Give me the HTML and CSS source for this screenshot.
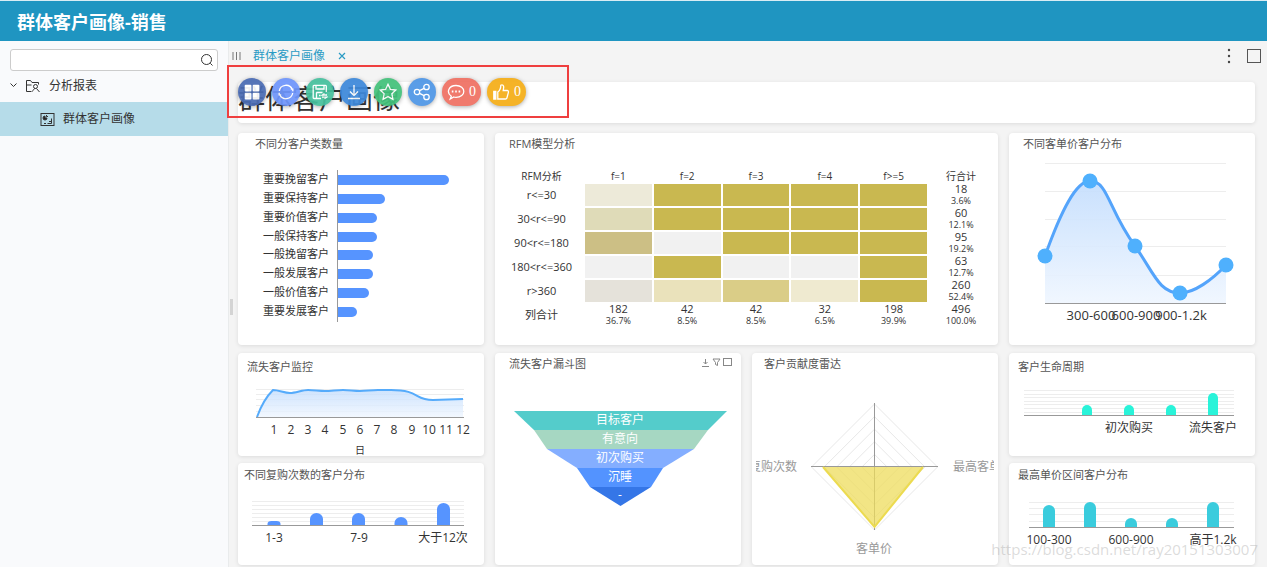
FILE: index.html
```html
<!DOCTYPE html>
<html lang="zh-CN">
<head>
<meta charset="utf-8">
<title>群体客户画像-销售</title>
<link rel="stylesheet" href="styles.css">
</head>
<body>
<header class="app-header"><h1>群体客户画像-销售</h1></header>
<div class="layout">
  <aside class="sidebar">
    <div class="search">
      <input type="text" aria-label="搜索">
      <button type="button" class="icon-btn" aria-label="搜索">
        <svg width="14" height="14" viewBox="0 0 14 14" class="line"><circle cx="6.5" cy="6.5" r="5"/><path d="M10.3 10.3l2.2 2.2"/></svg>
      </button>
    </div>
    <nav class="tree">
      <a class="node" href="#">
        <svg width="9" height="8" viewBox="0 0 9 8" class="line"><path d="M1.500 1.500l3 3 3-3"/></svg>
        <svg width="16" height="14" viewBox="0 0 16 14" class="line folder"><path d="M6.500 12.500H1.500V1.500h4l1.500 2h6.500v2M1.500 6h5"/><circle cx="10.500" cy="7.500" r="2"/><path d="M10.500 9.500c-1.500 0-2.500 1.500-3 3M11.500 9.500l3 3.500"/></svg>
        <span>分析报表</span>
      </a>
      <a class="node leaf" href="#" aria-current="page">
        <svg width="15" height="15" viewBox="0 0 15 15" class="line"><rect x="1" y="1.500" width="13" height="12"/><path d="M5 4a2 2 0 1 0 2 2H5z" fill="#222"/><path d="M6.500 3v1.500H8M4 11.500h2M7.500 11.500h4V6.500M9 9.500h2.500"/></svg>
        <span>群体客户画像</span>
      </a>
    </nav>
  </aside>
  <main class="main">
    <span class="splitter"></span>
    <div class="tabbar">
      <svg width="9" height="10" viewBox="0 0 9 10" class="grip"><path d="M1 1v8M4.500 1v8M8 1v8"/></svg>
      <a class="tab" href="#">群体客户画像</a>
      <button type="button" class="icon-btn close" aria-label="关闭"><svg width="8" height="8" viewBox="0 0 8 8"><path d="M1 1l6 6M7 1l-6 6"/></svg></button>
      <span class="spacer"></span>
      <button type="button" class="icon-btn" aria-label="更多"><svg width="4" height="16" viewBox="0 0 4 16" fill="#444"><circle cx="2" cy="2" r="1.200"/><circle cx="2" cy="8" r="1.200"/><circle cx="2" cy="14" r="1.200"/></svg></button>
      <button type="button" class="icon-btn" aria-label="最大化"><svg width="14" height="14" viewBox="0 0 14 14"><rect x="0.500" y="0.500" width="13" height="13" fill="none" stroke="#555"/></svg></button>
    </div>
    <div class="board">
      <section class="card banner"><h2>群体客户画像</h2></section>
      <div class="highlight"></div>
      <div class="toolbar">
        <button type="button" class="tool menu" aria-label="菜单"><svg width="16" height="16" viewBox="0 0 16 16"><rect x="0.700" y="0.700" width="6.700" height="6.700" rx="1"/><rect x="8.700" y="0.700" width="6.700" height="6.700" rx="1"/><rect x="0.700" y="8.700" width="6.700" height="6.700" rx="1"/><rect x="8.700" y="8.700" width="6.700" height="6.700" rx="1"/></svg></button>
        <button type="button" class="tool refresh" aria-label="刷新"><svg width="16" height="16" viewBox="0 0 16 16"><path d="M1.300 7a6.800 6.800 0 0 1 13-1.500M14.700 9a6.800 6.800 0 0 1-13 1.500M14.800 7.300V5.200h-2M1.200 8.700v2.100h2"/></svg></button>
        <button type="button" class="tool save" aria-label="保存"><svg width="16" height="16" viewBox="0 0 16 16"><path d="M9 14.500H2a.8.8 0 0 1-.8-.8V2.200a.8.8 0 0 1 .8-.8h11.500a.8.8 0 0 1 .8.8V8M4 1.500v3.500h8V1.500M4.500 14.500V8.500h6M7 11.500h1.500M15 11h-4.500l2-1.500M10 13.200h4.500l-2 1.500"/></svg></button>
        <button type="button" class="tool download" aria-label="下载"><svg width="16" height="16" viewBox="0 0 16 16"><path d="M8 1v10M4 7.500L8 11.500l4-4M2 14.500h12"/></svg></button>
        <button type="button" class="tool star" aria-label="收藏"><svg width="18" height="18" viewBox="0 0 18 18"><path d="M9 1.300l2.400 5 5.400.7-3.900 3.800 1 5.400L9 13.600l-4.900 2.600 1-5.400L1.200 7l5.400-.7z"/></svg></button>
        <button type="button" class="tool share" aria-label="分享"><svg width="18" height="18" viewBox="0 0 18 18"><circle cx="4" cy="9" r="2.700"/><circle cx="13.500" cy="4" r="2.700"/><circle cx="13.500" cy="14" r="2.700"/><path d="M6.500 7.700l4.600-2.400M6.500 10.300l4.600 2.400"/></svg></button>
        <button type="button" class="tool pill comment" aria-label="评论"><svg width="18" height="18" viewBox="0 0 18 18"><path d="M4.300 13.200C-1 9.500 1.500 2.500 9 2.500c4.800 0 7.800 2.700 7.800 5.900S13.800 14.300 9 14.300c-.8 0-1.500 0-2.200-.3L3.200 16z"/><path d="M4.800 8.500h1.600M8.200 8.500h1.600M11.600 8.500h1.600" stroke-width="2"/></svg><span>0</span></button>
        <button type="button" class="tool pill like" aria-label="点赞"><svg width="18" height="18" viewBox="0 0 18 18"><path d="M1.800 8.500h2v7.500h-2z" fill="#fff"/><path d="M5.800 9c2.500-1.800 3-4 3-6.800 1.600-1 3.200.2 2.900 2.300L11.200 7.500h4c1 0 1.400.8 1.200 1.800l-1.500 5.700c-.2.700-.6 1-1.400 1H5.800z"/></svg><span>0</span></button>
      </div>

      <div class="row">
        <section class="card">
          <h3 class="in-17">不同分客户类数量</h3>
          <svg class="chart small" viewBox="0 0 246 190">
            <g class="bar-blue">
              <path d="M100 20h106a5 5 0 0 1 0 10h-106z"/><path d="M100 39h42a5 5 0 0 1 0 10h-42z"/><path d="M100 58h34a5 5 0 0 1 0 10h-34z"/><path d="M100 77h34a5 5 0 0 1 0 10h-34z"/><path d="M100 95h30a5 5 0 0 1 0 10h-30z"/><path d="M100 114h30a5 5 0 0 1 0 10h-30z"/><path d="M100 133h26a5 5 0 0 1 0 10h-26z"/><path d="M100 152h14a5 5 0 0 1 0 10h-14z"/>
            </g>
            <path class="axis" d="M99.500 15v152"/>
            <g text-anchor="end"><text x="91" y="28">重要挽留客户</text><text x="91" y="47">重要保持客户</text><text x="91" y="66">重要价值客户</text><text x="91" y="85">一般保持客户</text><text x="91" y="103">一般挽留客户</text><text x="91" y="122">一般发展客户</text><text x="91" y="141">一般价值客户</text><text x="91" y="160">重要发展客户</text></g>
          </svg>
        </section>
        <section class="card wide">
          <h3 class="in-14">RFM模型分析</h3>
          <table class="rfm">
            <colgroup><col class="c-label"><col><col><col><col><col><col class="c-total"></colgroup>
            <thead><tr><th>RFM分析</th><th>f=1</th><th>f=2</th><th>f=3</th><th>f=4</th><th>f&gt;=5</th><th>行合计</th></tr></thead>
            <tbody>
              <tr><th>r&lt;=30</th><td class="h2"></td><td class="h6"></td><td class="h6"></td><td class="h6"></td><td class="h6"></td><td>18<small>3.6%</small></td></tr>
              <tr><th>30&lt;r&lt;=90</th><td class="h3"></td><td class="h6"></td><td class="h6"></td><td class="h6"></td><td class="h6"></td><td>60<small>12.1%</small></td></tr>
              <tr><th>90&lt;r&lt;=180</th><td class="h5"></td><td class="h0"></td><td class="h6"></td><td class="h6"></td><td class="h6"></td><td>95<small>19.2%</small></td></tr>
              <tr><th>180&lt;r&lt;=360</th><td class="h0"></td><td class="h6"></td><td class="h0"></td><td class="h0"></td><td class="h6"></td><td>63<small>12.7%</small></td></tr>
              <tr><th>r&gt;360</th><td class="h1"></td><td class="h7"></td><td class="h4"></td><td class="h8"></td><td class="h6"></td><td>260<small>52.4%</small></td></tr>
            </tbody>
            <tfoot><tr><th>列合计</th><td>182<small>36.7%</small></td><td>42<small>8.5%</small></td><td>42<small>8.5%</small></td><td>32<small>6.5%</small></td><td>198<small>39.9%</small></td><td>496<small>100.0%</small></td></tr></tfoot>
          </table>
        </section>
        <section class="card">
          <h3 class="in-14">不同客单价客户分布</h3>
          <svg class="chart large" viewBox="0 0 246 190">
            <defs><linearGradient id="fade" x1="0" y1="0" x2="0" y2="1"><stop offset="0" stop-color="#c3ddfd"/><stop offset="1" stop-color="#eff6ff"/></linearGradient></defs>
            <path class="rule" d="M36 8.500h181M36 36.500h181M36 64.500h181M36 91.500h181M36 120.500h181"/>
            <path d="M36 101C52 56 67 26 81 26C99 26 99 54 126 91C145 118 150 138 171 138C185 138 203 125 217 110V148H36z" fill="url(#fade)" fill-opacity=".9"/>
            <path class="curve thick" d="M36 101C52 56 67 26 81 26C99 26 99 54 126 91C145 118 150 138 171 138C185 138 203 125 217 110"/>
            <path class="axis" d="M36 148.500h181"/>
            <g fill="#4fb0fd"><circle cx="36" cy="101" r="7.500"/><circle cx="81" cy="26" r="7.500"/><circle cx="126" cy="91" r="7.500"/><circle cx="171" cy="138" r="7.500"/><circle cx="217" cy="110" r="7.500"/></g>
            <g text-anchor="middle"><text x="82" y="165">300-600</text><text x="127" y="165">600-900</text><text x="172" y="165">900-1.2k</text></g>
          </svg>
        </section>
      </div>

      <div class="row lower">
        <div class="stack">
          <section class="card">
            <h3 class="in-9 tall">流失客户监控</h3>
            <svg class="chart" viewBox="0 0 246 75" text-anchor="middle">
              <path class="rule" d="M18 8.500h208M18 13.500h208M18 18.500h208M18 24.500h208M18 30.500h208"/>
              <path d="M19 36C24 22 30 14 35 9C41 9 46 12 52 12S64 9 70 9S81 10 87 10S99 9 105 9S116 10 122 10S133 9 140 9H153C182 9 176 19 195 19L225 18V36z" fill="url(#fade)" fill-opacity=".8"/>
              <path class="curve" d="M19 36C24 22 30 14 35 9C41 9 46 12 52 12S64 9 70 9S81 10 87 10S99 9 105 9S116 10 122 10S133 9 140 9H153C182 9 176 19 195 19L225 18"/>
              <path class="axis" d="M18 36.500h208"/>
              <text x="36" y="53">1</text><text x="53" y="53">2</text><text x="70" y="53">3</text><text x="87" y="53">4</text><text x="105" y="53">5</text><text x="122" y="53">6</text><text x="139" y="53">7</text><text x="156" y="53">8</text><text x="174" y="53">9</text><text x="191" y="53">10</text><text x="208" y="53">11</text><text x="225" y="53">12</text>
              <text class="unit" x="122" y="73">日</text>
            </svg>
          </section>
          <section class="card">
            <h3 class="in-6 mid">不同复购次数的客户分布</h3>
            <svg class="chart" viewBox="0 0 246 78" text-anchor="middle">
              <path class="rule" d="M14 14.500h212M14 18.500h212M14 22.500h212M14 26.500h212M14 30.500h212M14 34.500h212"/>
              <g class="bar-blue"><path d="M29.500 38v-1a4 3 0 0 1 4-3h5a4 3 0 0 1 4 3v1z"/><path d="M72 38V32a6.500 6 0 0 1 13 0v6z"/><path d="M114 38V32a6.500 6 0 0 1 13 0v6z"/><path d="M156.500 38v-2a6.500 6 0 0 1 13 0v2z"/><path d="M199 38V22a6.500 6 0 0 1 13 0v16z"/></g>
              <path class="axis" d="M14 38.500h212"/>
              <text x="36" y="55">1-3</text><text x="121" y="55">7-9</text><text x="205" y="55">大于12次</text>
            </svg>
          </section>
        </div>
        <section class="card">
          <h3 class="in-14">流失客户漏斗图
            <span class="actions">
              <button type="button" class="icon-btn" aria-label="导出"><svg width="9" height="9" viewBox="0 0 9 9"><path d="M4.500 1v5M2.500 4l2 2 2-2M1 8.500h7"/></svg></button>
              <button type="button" class="icon-btn" aria-label="筛选"><svg width="9" height="9" viewBox="0 0 9 9"><path d="M1 1h7L5.500 4.500v3l-2-1v-2z"/></svg></button>
              <button type="button" class="icon-btn" aria-label="放大"><svg width="9" height="9" viewBox="0 0 9 9"><rect x="0.500" y="0.500" width="8" height="7"/></svg></button>
            </span>
          </h3>
          <svg class="chart funnel" viewBox="0 0 246 190" text-anchor="middle">
            <path d="M19 36h213l-19 19H39z" fill="#54cccb"/><path d="M39 55h174l-14 19H52z" fill="#a6d7c2"/><path d="M52 74h147l-31 19H82z" fill="#84aeff"/><path d="M82 93h86l-12 19H95z" fill="#5393ff"/><path d="M95 112h61l-30.500 19z" fill="#3576e7"/>
            <text x="125" y="49">目标客户</text><text x="125" y="68">有意向</text><text x="125" y="87">初次购买</text><text x="125" y="106">沉睡</text><text x="125" y="124">-</text>
          </svg>
        </section>
        <section class="card radar">
          <h3 class="in-12">客户贡献度雷达</h3>
          <svg class="chart" viewBox="0 0 238 190">
            <g class="ring"><path d="M118.500 29l63 63-63 63-63-63z"/><path d="M118.500 41.600l50.400 50.400-50.400 50.400L68.100 92z"/><path d="M118.500 54.200L156.300 92l-37.800 37.800L80.700 92z"/><path d="M118.500 66.800L143.700 92l-25.200 25.200L93.300 92z"/><path d="M118.500 79.400L131.100 92l-12.600 12.600L105.900 92z"/></g>
            <path class="axis" d="M118.500 28v127M55 91.500h127"/>
            <path d="M67 92h100l-48.500 60z" fill="#eedc5c" fill-opacity=".75"/>
            <path d="M67 92l51.500 60L167 92" fill="none" stroke="#ecdb50" stroke-width="2"/>
            <text x="41" y="96" text-anchor="end">复购次数</text><text x="197" y="96">最高客单价</text><text x="118" y="178" text-anchor="middle">客单价</text>
          </svg>
        </section>
        <div class="stack">
          <section class="card">
            <h3 class="in-9 tall">客户生命周期</h3>
            <svg class="chart" viewBox="0 0 246 75" text-anchor="middle">
              <path class="rule" d="M15 9.500h210M15 13.500h210M15 16.500h210M15 20.500h210M15 23.500h210M15 27.500h210M15 31.500h210"/>
              <g fill="#29f3d9"><path d="M73 34v-5a5 5 0 0 1 10 0v5z"/><path d="M115 34v-5a5 5 0 0 1 10 0v5z"/><path d="M157 34v-5a5 5 0 0 1 10 0v5z"/><path d="M199 34V17a5 5 0 0 1 10 0v17z"/></g>
              <path class="axis" d="M15 34.500h210"/>
              <text x="120" y="51">初次购买</text><text x="204" y="51">流失客户</text>
            </svg>
          </section>
          <section class="card">
            <h3 class="in-9 mid">最高单价区间客户分布</h3>
            <svg class="chart" viewBox="0 0 246 78" text-anchor="middle">
              <path class="rule" d="M20 15.500h205M20 21.500h205M20 27.500h205M20 34.500h205"/>
              <g fill="#3accdd"><path d="M34 40V24a6 6 0 0 1 12 0v16z"/><path d="M75 40V21a6 6 0 0 1 12 0v19z"/><path d="M116 40v-3a6 6 0 0 1 12 0v3z"/><path d="M157 40v-3a6 6 0 0 1 12 0v3z"/><path d="M198 40V21a6 6 0 0 1 12 0v19z"/></g>
              <path class="axis" d="M20 40.500h205"/>
              <text x="40" y="57">100-300</text><text x="122" y="57">600-900</text><text x="204" y="57">高于1.2k</text>
            </svg>
          </section>
        </div>
      </div>
    </div>
    <span class="watermark">https://blog.csdn.net/ray20151303007</span>
  </main>
</div>
</body>
</html>
```
FILE: styles.css
```css
* { box-sizing: border-box; }
body {
  margin: 0;
  min-height: 100vh;
  display: flex;
  flex-direction: column;
  background: #f4f4f4;
  color: #333;
  font: 12px/16px "Open Sans", "Noto Sans CJK SC", sans-serif;
}
h1, h2, h3 { margin: 0; font-weight: 400; }
a { color: inherit; text-decoration: none; }
svg { display: block; flex: none; }
button, input { font: inherit; color: inherit; }
button { border: 0; padding: 0; background: none; cursor: pointer; }
.icon-btn { display: flex; align-items: center; justify-content: center; }
.line { fill: none; stroke: #333; stroke-width: 1; }

.app-header {
  height: 41px;
  padding: 2px 17px 0;
  display: flex;
  align-items: center;
  border-top: 1px solid #d9ecf4;
  background: #1f95c1;
  color: #fff;
}
.app-header h1 { font-size: 18px; line-height: 24px; font-weight: 700; }

.layout { flex: 1; display: flex; }
.sidebar { width: 228px; flex: none; padding-top: 8px; background: #f9fafc; }
.search {
  display: flex;
  align-items: center;
  height: 22px;
  margin: 0 10px;
  padding-right: 3px;
  border: 1px solid #ccc;
  border-radius: 3px;
  background: #fff;
}
.search input { flex: 1; min-width: 0; height: 20px; border: 0; outline: 0; background: none; }
.node { display: flex; align-items: center; height: 31px; padding: 0 9px 2px; }
.node .folder { margin: 0 8px 0 7px; }
.leaf { height: 34px; padding: 0 40px; gap: 8px; background: #b6dce9; }

.main { flex: 1; min-width: 0; position: relative; padding: 0 12px 2px 9px; border-left: 1px solid #e9ebec; }
.splitter { position: absolute; left: 1px; top: 258px; width: 3px; height: 16px; background: #d4d4d4; }
.tabbar { height: 41px; margin: 0 -7px; padding: 0 1px 11px; display: flex; align-items: center; }
.grip { stroke: #777; stroke-width: 1; }
.tab { margin: 0 13px 0 12px; color: #2a9bc4; }
.close svg { stroke: #2a9bc4; stroke-width: 1.200; fill: none; }
.spacer { flex: 1; }
.tabbar .icon-btn + .icon-btn { margin-left: 16px; }

.board { position: relative; }
.card { background: #fff; border-radius: 4px; box-shadow: 0 1px 4px rgba(0, 0, 0, .1); min-width: 0; }
.banner { height: 41px; }
.banner h2 { font-size: 27px; line-height: 34px; }

.highlight { position: absolute; left: -11px; top: -17px; width: 342px; height: 53px; border: 2px solid #ef3f3f; }
.toolbar { position: absolute; left: 0; top: -4px; display: flex; gap: 6px; }
.tool {
  width: 28px;
  height: 28px;
  display: flex;
  align-items: center;
  justify-content: center;
  border-radius: 14px;
  color: #fff;
  opacity: .93;
  box-shadow: 0 1px 4px rgba(0, 0, 0, .35);
}
.tool svg { fill: none; stroke: #fff; stroke-width: 1.3; }
.tool.menu svg { fill: #fff; stroke: none; }
.pill { width: 39px; gap: 4px; font: 14px/20px "Liberation Serif", serif; }
.menu { background: #4a6bb3; }
.refresh { background: #6e95fb; }
.save { background: #45c09d; }
.download { background: #3d88da; }
.star { background: #42c17a; }
.share { background: #4e96e6; }
.comment { background: #ef7062; }
.like { background: #f5ae17; }

.row { display: grid; grid-template-columns: repeat(4, minmax(0, 1fr)); gap: 11px; margin-top: 10px; }
.row.lower { margin-top: 8px; }
.wide { grid-column: span 2; }
.stack { display: flex; flex-direction: column; gap: 7px; }
h3 { display: flex; font-size: 11px; line-height: 22px; color: #555; }
h3.mid { line-height: 24px; }
h3.tall { line-height: 28px; }
.in-6 { padding-left: 6px; }
.in-9 { padding-left: 9px; }
.in-12 { padding-left: 12px; }
.in-14 { padding-left: 14px; }
.in-17 { padding-left: 17px; }
.actions { display: flex; gap: 2px; margin-left: auto; padding: 0 9px 3px 0; }
.actions svg { fill: none; stroke: #888; }

.chart { width: 100%; height: auto; font-size: 12px; fill: #333; }
.chart.small { font-size: 11px; }
.chart.large { font-size: 13px; }
.unit { font-size: 10px; }
.bar-blue { fill: #5694ff; }
.axis { stroke: #999; fill: none; }
.rule { stroke: #ededed; fill: none; }
.ring { stroke: #e8e8e8; fill: none; }
.curve { stroke: #55abfb; stroke-width: 2; fill: none; }
.curve.thick { stroke: #54a4fb; stroke-width: 3; }
.funnel text { fill: #fff; }
.radar .chart { width: calc(100% - 8px); margin: 0 4px; }
.radar text { fill: #999; }

.rfm { width: calc(100% - 8px); margin: 0 4px; table-layout: fixed; border-collapse: separate; border-spacing: 0; font-size: 11px; line-height: 12px; text-align: center; }
.rfm th, .rfm td { padding: 0; height: 24px; font-weight: 400; }
.rfm thead th { height: 28px; padding-bottom: 1px; vertical-align: bottom; font-size: 10px; }
.rfm small { display: block; font-size: 9px; }
.c-label { width: 85px; }
.c-total { width: 66px; }
.rfm td[class] { border: 1px solid #fff; }
.h0 { background: #f1f1f1; }
.h1 { background: #e5e2da; }
.h2 { background: #edead9; }
.h3 { background: #dfdbb8; }
.h4 { background: #dacd87; }
.h5 { background: #ccbf85; }
.h6 { background: #c9b850; }
.h7 { background: #eae2bb; }
.h8 { background: #efead0; }

.watermark { position: absolute; right: 9px; bottom: 8px; font: 15px/20px "Open Sans", sans-serif; color: rgba(170, 170, 170, .42); pointer-events: none; }
```
